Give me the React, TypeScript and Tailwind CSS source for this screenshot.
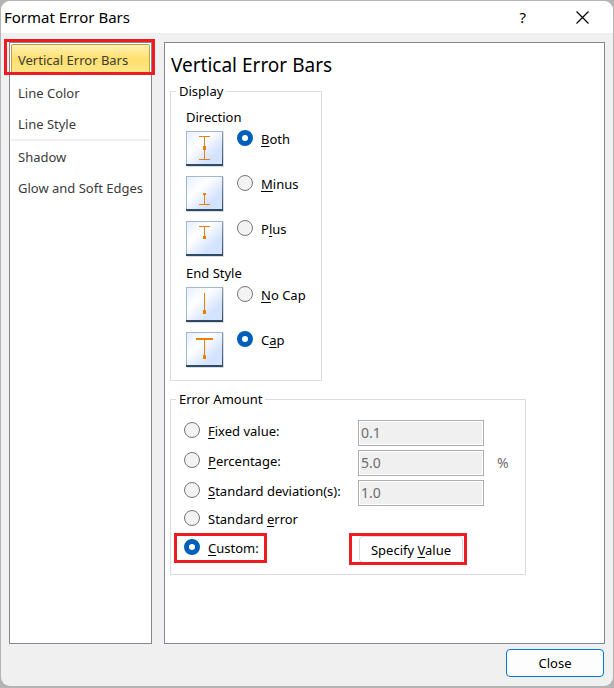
import { useState, type ReactNode } from "react";

type GlyphKind = "both" | "minus" | "plus" | "nocap" | "cap";

function BarGlyph({ kind }: { kind: GlyphKind }) {
  return (
    <svg width="39" height="37" viewBox="0 0 39 37" shapeRendering="crispEdges" className="shrink-0" aria-hidden="true">
      <defs>
        <linearGradient id={`face-${kind}`} x1="0" y1="0" x2="1" y2="1">
          <stop offset="0" stopColor="#e6efff" />
          <stop offset="0.35" stopColor="#ffffff" />
          <stop offset="0.75" stopColor="#d3e2fe" />
          <stop offset="1" stopColor="#d6e4fe" />
        </linearGradient>
        <linearGradient id={`edge-${kind}`} x1="0" y1="0" x2="0" y2="1">
          <stop offset="0" stopColor="#8fa5c0" />
          <stop offset="1" stopColor="#2c4867" />
        </linearGradient>
      </defs>
      <rect x="1" y="1" width="37" height="35" fill="#dcdcdc" />
      <rect x="0" y="0" width="37" height="35" fill={`url(#edge-${kind})`} />
      <rect x="0" y="0" width="36" height="33" fill="#a3b6d0" />
      <rect x="1" y="1" width="35" height="32" fill={`url(#face-${kind})`} />
      <g fill="#e8800e">
        {kind === "both" && <path d="M13 5h11v1h-5v22h5v1h-11v-1h5v-22h-5zM17 15h3v4h-3z" />}
        {kind === "minus" && <path d="M17 17h3v2h-1v9h5v1h-11v-1h5v-9h-1z" />}
        {kind === "plus" && <path d="M13 5h11v1h-5v9h1v3h-3v-3h1v-9h-5z" />}
        {kind === "nocap" && <path d="M18 6h1v17h1v4h-3v-4h1z" />}
        {kind === "cap" && <path d="M10 6h17v2h-8v15h1v4h-3v-4h1v-15h-8z" />}
      </g>
    </svg>
  );
}

const radioStyle =
  "size-4 shrink-0 appearance-none rounded-full border border-[#767676] bg-[#f3f3f3] checked:border-5 checked:border-[#005fb8] checked:bg-white";

function Key({ children }: { children: ReactNode }) {
  return <span className="underline decoration-1 underline-offset-2">{children}</span>;
}

interface OptionProps {
  name: string;
  value: string;
  current: string;
  onPick: (value: string) => void;
  children: ReactNode;
}

function Option({ name, value, current, onPick, children }: OptionProps) {
  return (
    <label className="flex items-start gap-2">
      <input
        type="radio"
        name={name}
        value={value}
        checked={current === value}
        onChange={() => onPick(value)}
        className={radioStyle}
      />
      <span className="leading-[18px] whitespace-nowrap">{children}</span>
    </label>
  );
}

function GlyphRow({ kind, children }: { kind: GlyphKind; children: ReactNode }) {
  return (
    <div className="flex h-[45px] items-start gap-3">
      <div className="pt-px">
        <BarGlyph kind={kind} />
      </div>
      {children}
    </div>
  );
}

function Amount({ label, value }: { label: string; value: string }) {
  return (
    <input
      aria-label={label}
      defaultValue={value}
      disabled
      className="h-[26px] w-[126px] border border-[#abadb3] bg-[#f0f0f0] px-0.5 pb-0.5 text-[14px] text-[#6d6d6d] ring-1 ring-white ring-inset"
    />
  );
}

function Highlight({ className }: { className: string }) {
  return <div className={`pointer-events-none absolute border-3 border-[#ed1c24] ${className}`} />;
}

export default function App() {
  const [section, setSection] = useState("Vertical Error Bars");
  const [direction, setDirection] = useState("both");
  const [endStyle, setEndStyle] = useState("cap");
  const [amount, setAmount] = useState("custom");

  const item = (name: string) => (
    <button
      type="button"
      onClick={() => setSection(name)}
      className={`flex h-[31px] w-full items-center rounded-t-xs border px-1.5 text-left whitespace-nowrap ${
        section === name
          ? "border-[#c29b4b] bg-linear-to-b from-[#fff0b0] via-[#ffdf6b] to-[#ffe88c]"
          : "border-transparent"
      }`}
    >
      {name}
    </button>
  );

  return (
    <div className="flex min-h-screen bg-[#b4b4b4] px-px pt-px pb-0.5 font-['Noto_Sans',sans-serif] text-[13px] leading-5 text-black">
      <div className="flex w-full flex-col overflow-hidden rounded-[9px] bg-[#f0f0f0]">
        <header className="flex h-8 items-center bg-white pr-6 pl-[3px]">
          <h1 className="flex-1 text-[15px]">Format Error Bars</h1>
          <button type="button" aria-label="Help" className="mr-[50px] text-[15px]">
            ?
          </button>
          <button type="button" aria-label="Close window">
            <svg width="13" height="13" viewBox="0 0 13 13" fill="none" stroke="#000" strokeWidth="1.2">
              <path d="M0.5 0.5l12 12M12.5 0.5l-12 12" />
            </svg>
          </button>
        </header>

        <main className="flex flex-1 gap-3 px-2 pt-[9px]">
          <nav className="relative w-[143px] shrink-0 border border-[#828790] bg-white p-px text-[#3b3b3b]">
            <Highlight className="-top-1 -left-1.5 h-9 w-[151px]" />
            {item("Vertical Error Bars")}
            <div className="h-0.5" />
            {item("Line Color")}
            {item("Line Style")}
            <hr className="h-0.5 border-0 bg-[#f0f0f4]" />
            {item("Shadow")}
            {item("Glow and Soft Edges")}
          </nav>

          <section className="flex-1 border border-[#828790] bg-white px-[5px] pt-2">
            <h2 className="h-[30px] pl-px text-[19px] leading-7">Vertical Error Bars</h2>

            <fieldset className="h-[300px] w-[152px] border border-[#dcdcdc] px-[15px]">
              <legend className="-ml-2.5 px-[3px]">Display</legend>
              <div role="radiogroup" aria-label="Direction" className="pt-1.5">
                <p className="h-[23px]">Direction</p>
                <GlyphRow kind="both">
                  <Option name="direction" value="both" current={direction} onPick={setDirection}>
                    <Key>B</Key>oth
                  </Option>
                </GlyphRow>
                <GlyphRow kind="minus">
                  <Option name="direction" value="minus" current={direction} onPick={setDirection}>
                    <Key>M</Key>inus
                  </Option>
                </GlyphRow>
                <GlyphRow kind="plus">
                  <Option name="direction" value="plus" current={direction} onPick={setDirection}>
                    P<Key>l</Key>us
                  </Option>
                </GlyphRow>
              </div>
              <div role="radiogroup" aria-label="End Style">
                <p className="h-[21px] leading-4">End Style</p>
                <GlyphRow kind="nocap">
                  <Option name="end" value="nocap" current={endStyle} onPick={setEndStyle}>
                    <Key>N</Key>o Cap
                  </Option>
                </GlyphRow>
                <GlyphRow kind="cap">
                  <Option name="end" value="cap" current={endStyle} onPick={setEndStyle}>
                    C<Key>a</Key>p
                  </Option>
                </GlyphRow>
              </div>
            </fieldset>

            <fieldset className="mt-2 h-[186px] w-[356px] border border-[#dcdcdc] px-[13px]">
              <legend className="-ml-2 px-[3px]">Error Amount</legend>
              <div className="flex items-start justify-between pt-[11px] pr-[28px]">
                <div role="radiogroup" aria-label="Error Amount" className="relative flex flex-col pt-0.5">
                  <div className="h-[30px]">
                    <Option name="amount" value="fixed" current={amount} onPick={setAmount}>
                      <Key>F</Key>ixed value:
                    </Option>
                  </div>
                  <div className="h-[30px]">
                    <Option name="amount" value="percent" current={amount} onPick={setAmount}>
                      <Key>P</Key>ercentage:
                    </Option>
                  </div>
                  <div className="h-7">
                    <Option name="amount" value="deviation" current={amount} onPick={setAmount}>
                      <Key>S</Key>tandard deviation(s):
                    </Option>
                  </div>
                  <div className="h-[29px]">
                    <Option name="amount" value="error" current={amount} onPick={setAmount}>
                      Standard <Key>e</Key>rror
                    </Option>
                  </div>
                  <Option name="amount" value="custom" current={amount} onPick={setAmount}>
                    <Key>C</Key>ustom:
                  </Option>
                  <Highlight className="-bottom-1.5 -left-2.5 h-[30px] w-[93px]" />
                </div>
                <div className="relative flex w-[126px] flex-col gap-1">
                  <Amount label="Fixed value" value="0.1" />
                  <div className="relative">
                    <Amount label="Percentage" value="5.0" />
                    <span className="absolute top-[3px] left-[139px] text-[14px] text-[#6d6d6d]">%</span>
                  </div>
                  <Amount label="Standard deviation(s)" value="1.0" />
                  <button
                    type="button"
                    className="mt-[26px] ml-px h-[27px] w-[104px] rounded-sm border border-[#d8d8d8] bg-white"
                  >
                    Specify <Key>V</Key>alue
                  </button>
                  <Highlight className="-bottom-[2px] -left-[9px] h-8 w-[118px]" />
                </div>
              </div>
            </fieldset>
          </section>
        </main>

        <footer className="flex justify-end px-[9px] pt-[5px] pb-[9px]">
          <button type="button" className="h-7 w-[98px] rounded-sm border border-[#0078d4] bg-[#fdfdfd]">
            Close
          </button>
        </footer>
      </div>
    </div>
  );
}
